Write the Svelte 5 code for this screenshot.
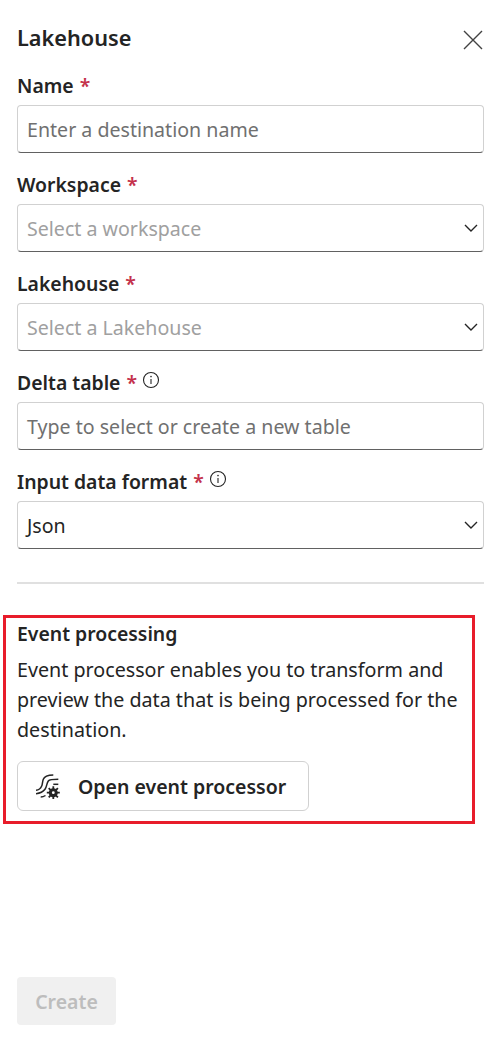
<script lang="ts">
type Field = {
	label: string;
	kind: "input" | "select";
	placeholder?: string;
	value?: string;
	info?: boolean;
};

const fields: Field[] = [
	{ label: "Name", kind: "input", placeholder: "Enter a destination name" },
	{ label: "Workspace", kind: "select", placeholder: "Select a workspace" },
	{ label: "Lakehouse", kind: "select", placeholder: "Select a Lakehouse" },
	{ label: "Delta table", kind: "input", placeholder: "Type to select or create a new table", info: true },
	{ label: "Input data format", kind: "select", value: "Json", info: true }
];
</script>

<div class="panel">
	<header class="head">
		<h2>Lakehouse</h2>
		<button class="close" type="button" aria-label="Close">
			<svg width="20" height="20" viewBox="0 0 20 20"><path d="M1 1l18 18M19 1L1 19" stroke="#424242" stroke-width="1.4" fill="none" /></svg>
		</button>
	</header>

	<div class="fields">
		{#each fields as field}
			<div class="field">
				<div class="label">
					<span>{field.label}</span>
					<span class="req">*</span>
					{#if field.info}
						<svg class="info" width="18" height="18" viewBox="0 0 18 18">
							<circle cx="9" cy="9" r="7.5" stroke="#242424" stroke-width="1.1" fill="none" />
							<path d="M9 8v5" stroke="#242424" stroke-width="1.1" />
							<circle cx="9" cy="5.6" r="0.8" fill="#242424" />
						</svg>
					{/if}
				</div>
				<div class="control">
					{#if field.value}
						<span class="value">{field.value}</span>
					{:else}
						<span class:dim={field.kind === "select"} class="hint">{field.placeholder}</span>
					{/if}
					{#if field.kind === "select"}
						<svg class="chev" width="14" height="8" viewBox="0 0 14 8"><path d="M1 1l6 6 6-6" stroke="#242424" stroke-width="1.4" fill="none" /></svg>
					{/if}
				</div>
			</div>
		{/each}
	</div>

	<hr />

	<section class="processing">
		<h3>Event processing</h3>
		<p>Event processor enables you to transform and preview the data that is being processed for the destination.</p>
		<button class="open" type="button">
			<svg width="24" height="25" viewBox="0 0 24 25" fill="none" stroke="#242424" stroke-width="1.5">
				<path d="M17.300 1C11 1 8.300 2.500 7.300 5.300 6.300 8 6.500 10.500 5.700 12 4.500 14.800 2.500 16 0 16.300" />
				<path d="M22.300 5.300C16 5.300 13.500 5.500 12.300 7 10.500 9.500 11 12.500 9 15.300 7 18 4 19.300 0 19.700" />
				<path d="M22.300 10.300h-5" />
				<path d="M9.500 21.500c-1.500 1-3 1.500-4.800 1.500" />
				<path d="M17.300 12.200v13M10.800 18.700h13M12.700 14.100l9.200 9.200M21.900 14.100l-9.200 9.200" stroke-width="1.800" />
				<circle cx="17.300" cy="18.700" r="4.500" fill="#242424" stroke="none" />
				<circle cx="17.300" cy="18.700" r="1.400" fill="#fff" stroke="none" />
			</svg>
			<span>Open event processor</span>
		</button>
	</section>

	<div class="footer">
		<button class="create" type="button" disabled>Create</button>
	</div>
</div>

<style>
:global(body) {
	margin: 0;
	background: #fff;
}
.panel {
	height: 1045px;
	box-sizing: border-box;
	padding: 22px 16px 20px 17px;
	display: flex;
	flex-direction: column;
	font-family: "Noto Sans", "Open Sans", sans-serif;
	color: #242424;
}
.head {
	display: flex;
	justify-content: space-between;
	align-items: center;
	height: 32px;
	margin-bottom: 22px;
}
h2 {
	margin: 0;
	font-size: 21.700px;
	font-weight: 600;
	line-height: 32px;
}
.close {
	background: none;
	border: none;
	padding: 0;
	margin: 4px 1px 0 0;
	display: flex;
}
.fields {
	display: flex;
	flex-direction: column;
	gap: 22px;
}
.label {
	display: flex;
	align-items: center;
	gap: 6px;
	height: 24px;
	margin-bottom: 8px;
	margin-top: -3px;
	font-size: 19.400px;
	font-weight: 600;
}
.req {
	color: #c4314b;
	font-weight: 600;
}
.info {
	margin-top: -4px;
	margin-left: -1px;
}
.control {
	height: 48px;
	box-sizing: border-box;
	border: 1px solid #d1d1d1;
	border-bottom-color: #616161;
	border-radius: 4px;
	padding: 0 5px 0 9px;
	display: flex;
	align-items: center;
	justify-content: space-between;
	font-size: 19.600px;
}
.hint {
	color: #707070;
}
.hint.dim {
	color: #a0a0a0;
}
hr {
	border: none;
	height: 2px;
	background: #e0e0e0;
	margin: 33px 0 31px;
}
.processing {
	border: 3px solid #e81c2a;
	margin: 0 9px 0 -14px;
	padding: 3px 11px 10px 11px;
}
h3 {
	margin: 0 0 8px;
	font-size: 19.400px;
	font-weight: 600;
	line-height: 26px;
}
p {
	margin: 0 0 16px;
	font-size: 19.700px;
	line-height: 30px;
}
.open {
	display: flex;
	align-items: center;
	gap: 18px;
	height: 50px;
	width: 292px;
	box-sizing: border-box;
	padding: 0 0 0 18px;
	background: #fff;
	border: 1px solid #d1d1d1;
	border-radius: 6px;
	font: inherit;
	font-size: 19.500px;
	font-weight: 600;
	color: #242424;
}
.footer {
	margin-top: auto;
}
.create {
	width: 99px;
	height: 48px;
	border: none;
	border-radius: 4px;
	background: #f0f0f0;
	color: #bdbdbd;
	font: inherit;
	font-size: 19.500px;
	font-weight: 600;
}
</style>
